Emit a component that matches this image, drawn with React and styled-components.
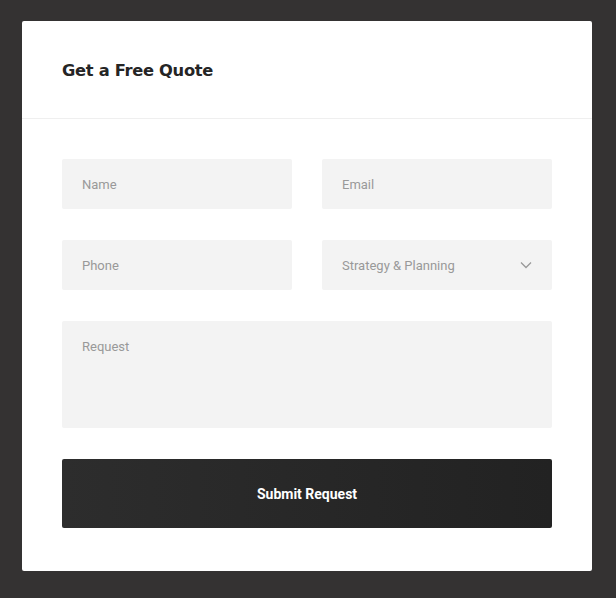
import styled, { createGlobalStyle } from 'styled-components';

const GlobalStyle = createGlobalStyle`
    html, body {
        margin: 0;
        padding: 0;
        background-color: #343232;
    }
    * {
        box-sizing: border-box;
    }
`;

export default function App() {
    return (
        <Pagina>
            <GlobalStyle />
            <Cartao>
                <Cabecalho>
                    <Titulo>Get a Free Quote</Titulo>
                </Cabecalho>
                <Formulario onSubmit={(e) => e.preventDefault()}>
                    <Linha>
                        <Campo placeholder="Name" />
                        <Campo placeholder="Email" />
                    </Linha>
                    <Linha>
                        <Campo placeholder="Phone" />
                        <SelectBox>
                            <span>Strategy &amp; Planning</span>
                            <svg width="12" height="8" viewBox="0 0 12 8" fill="none">
                                <path d="M1 1.5 L6 6.5 L11 1.5" stroke="#999" strokeWidth="1.3" />
                            </svg>
                        </SelectBox>
                    </Linha>
                    <AreaTexto placeholder="Request" />
                    <BotaoEnviar type="submit">Submit Request</BotaoEnviar>
                </Formulario>
            </Cartao>
        </Pagina>
    );
}

const Pagina = styled.div`
    width: 616px;
    height: 598px;
    padding: 21px 24px 27px 22px;
`;

const Cartao = styled.div`
    width: 570px;
    height: 550px;
    background-color: #ffffff;
    border-radius: 2px;
    display: flex;
    flex-direction: column;
`;

const Cabecalho = styled.div`
    height: 98px;
    border-bottom: 1px solid #efefef;
    display: flex;
    align-items: center;
    padding: 2px 40px 0;
`;

const Titulo = styled.h2`
    margin: 0;
    font-family: "DejaVu Sans", sans-serif;
    font-weight: bold;
    font-size: 16.3px;
    letter-spacing: -0.3px;
    color: #252525;
`;

const Formulario = styled.form`
    display: flex;
    flex-direction: column;
    gap: 31px;
    padding: 40px 40px 0;
`;

const Linha = styled.div`
    display: grid;
    grid-template-columns: 230px 230px;
    justify-content: space-between;
`;

const Campo = styled.input`
    height: 50px;
    border: none;
    outline: none;
    border-radius: 2px;
    background-color: #f3f3f3;
    padding: 0 20px;
    font-family: Roboto, sans-serif;
    font-size: 13px;
    color: #333;

    &::placeholder {
        color: #999;
    }
`;

const SelectBox = styled.div`
    height: 50px;
    border-radius: 2px;
    background-color: #f3f3f3;
    padding: 0 20px 0 20px;
    display: flex;
    align-items: center;
    justify-content: space-between;
    font-family: Roboto, sans-serif;
    font-size: 13px;
    color: #999;
`;

const AreaTexto = styled.textarea`
    height: 107px;
    border: none;
    outline: none;
    resize: none;
    border-radius: 2px;
    background-color: #f3f3f3;
    padding: 18px 20px;
    font-family: Roboto, sans-serif;
    font-size: 13px;
    color: #333;

    &::placeholder {
        color: #999;
    }
`;

const BotaoEnviar = styled.button`
    height: 69px;
    border: none;
    border-radius: 2px;
    background: linear-gradient(to right, #2d2d2d, #222222);
    color: #ffffff;
    font-family: Roboto, sans-serif;
    font-weight: bold;
    font-size: 14px;
    cursor: pointer;
`;
